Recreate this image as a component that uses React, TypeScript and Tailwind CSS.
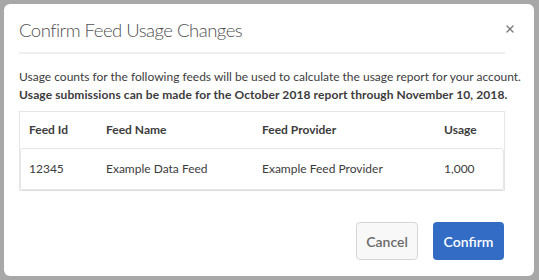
import { X } from "lucide-react";

const rows = [{ id: "12345", name: "Example Data Feed", provider: "Example Feed Provider", usage: "1,000" }];

export default function App() {
  return (
    <div className="h-[280px] w-[539px] bg-[#a8a8a8] pt-[4px] pl-[4px] font-['Lato','Liberation_Sans',sans-serif] text-[#4b4b4b]">
      <div className="flex h-[272px] w-[530px] flex-col rounded-[6px] bg-white pl-[15px] pr-[29px]">
        <div className="flex h-[50px] items-end justify-between border-b-2 border-[#efefef] pb-[13px]">
          <h2 className="text-[18.5px] font-light leading-none tracking-[-0.5px] text-[#505050]">Confirm Feed Usage Changes</h2>
          <button className="mb-[4px] mr-[-11px] text-[#777]">
            <X size={12} strokeWidth={2.5} />
          </button>
        </div>
        <div className="mt-[14px] whitespace-nowrap text-[12px] leading-[18px] text-[#3c3c3c]">
          <p>Usage counts for the following feeds will be used to calculate the usage report for your account.</p>
          <p className="font-bold tracking-[0.1px]">Usage submissions can be made for the October 2018 report through November 10, 2018.</p>
        </div>
        <div className="mt-[7px] w-[486px] border border-[#e6e6e6] text-[12px] text-[#3c3c3c]">
          <div className="flex h-[36px] items-center font-bold">
            <div className="w-[86px] pl-[9px]">Feed Id</div>
            <div className="w-[156px]">Feed Name</div>
            <div className="w-[182px]">Feed Provider</div>
            <div>Usage</div>
          </div>
          {rows.map((r) => (
            <div key={r.id} className="flex h-[42px] items-center rounded-[3px] border border-[#e6e6e6] shadow-[0_1px_1px_rgba(0,0,0,0.04)]">
              <div className="w-[85px] pl-[8px]">{r.id}</div>
              <div className="w-[156px]">{r.name}</div>
              <div className="w-[182px]">{r.provider}</div>
              <div>{r.usage}</div>
            </div>
          ))}
        </div>
        <div className="mt-[31px] flex justify-end gap-[15px] pr-[1px]">
          <button className="h-[38px] w-[62px] rounded-[4px] border border-[#d6d6d6] bg-[#f8f8f8] text-[14px] font-semibold text-[#6a6a6a]">
            Cancel
          </button>
          <button className="h-[38px] w-[71px] rounded-[4px] bg-[#336cc4] text-[14px] font-semibold text-white">Confirm</button>
        </div>
      </div>
    </div>
  );
}
